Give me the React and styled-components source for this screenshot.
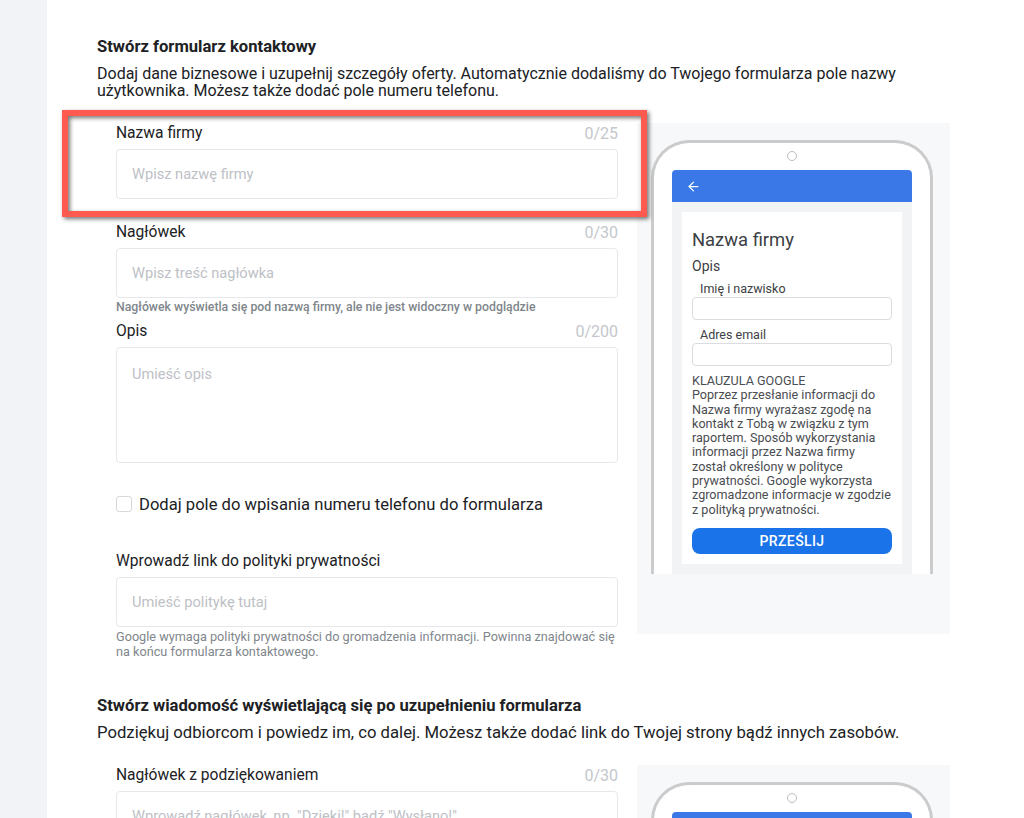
import React from 'react'
import styled, { createGlobalStyle } from 'styled-components'
import { ArrowLeft } from 'lucide-react'

const GlobalStyle = createGlobalStyle`
  * { box-sizing: border-box; }
  body {
    margin: 0;
    font-family: Roboto, "Noto Sans", "Liberation Sans", sans-serif;
    color: #202124;
    background: #fff;
  }
`

function Phone({ children }) {
    return (
        <PhoneFrame>
            <Camera />
            <Screen>
                <ScreenBar>
                    <ArrowLeft size={15} strokeWidth={2} color="#fff" />
                </ScreenBar>
                <ScreenBody>
                    <Card>{children}</Card>
                </ScreenBody>
            </Screen>
        </PhoneFrame>
    )
}

function App() {
    return (
        <Page>
            <GlobalStyle />
            <Sidebar />
            <Main>
                <Section>
                    <Title>Stwórz formularz kontaktowy</Title>
                    <Lead $size={16}>
                        Dodaj dane biznesowe i uzupełnij szczegóły oferty. Automatycznie dodaliśmy do Twojego formularza pole nazwy użytkownika. Możesz także dodać pole numeru telefonu.
                    </Lead>
                    <Row>
                        <FormCol>
                            <Field $gap={23}>
                                <Highlight />
                                <LabelRow>
                                    <Label>Nazwa firmy</Label>
                                    <Counter>0/25</Counter>
                                </LabelRow>
                                <Input placeholder="Wpisz nazwę firmy" />
                            </Field>
                            <Field $gap={6}>
                                <LabelRow>
                                    <Label>Nagłówek</Label>
                                    <Counter>0/30</Counter>
                                </LabelRow>
                                <Input placeholder="Wpisz treść nagłówka" />
                                <Helper $strong>Nagłówek wyświetla się pod nazwą firmy, ale nie jest widoczny w podglądzie</Helper>
                            </Field>
                            <Field $gap={31}>
                                <LabelRow>
                                    <Label>Opis</Label>
                                    <Counter>0/200</Counter>
                                </LabelRow>
                                <TextArea placeholder="Umieść opis" />
                            </Field>
                            <CheckRow>
                                <CheckBox type="checkbox" />
                                Dodaj pole do wpisania numeru telefonu do formularza
                            </CheckRow>
                            <Field $gap={0}>
                                <LabelRow>
                                    <Label>Wprowadź link do polityki prywatności</Label>
                                </LabelRow>
                                <Input placeholder="Umieść politykę tutaj" />
                                <Helper>
                                    Google wymaga polityki prywatności do gromadzenia informacji. Powinna znajdować się na końcu formularza kontaktowego.
                                </Helper>
                            </Field>
                        </FormCol>
                        <Preview>
                            <Phone>
                                <CardTitle>Nazwa firmy</CardTitle>
                                <CardDesc>Opis</CardDesc>
                                <MiniLabel>Imię i nazwisko</MiniLabel>
                                <MiniInput />
                                <MiniLabel>Adres email</MiniLabel>
                                <MiniInput />
                                <Clause>
                                    KLAUZULA GOOGLE<br />
                                    Poprzez przesłanie informacji do<br />
                                    Nazwa firmy wyrażasz zgodę na<br />
                                    kontakt z Tobą w związku z tym<br />
                                    raportem. Sposób wykorzystania<br />
                                    informacji przez Nazwa firmy<br />
                                    został określony w polityce<br />
                                    prywatności. Google wykorzysta<br />
                                    zgromadzone informacje w zgodzie<br />
                                    z polityką prywatności.
                                </Clause>
                                <SubmitButton>PRZEŚLIJ</SubmitButton>
                            </Phone>
                        </Preview>
                    </Row>
                </Section>

                <Section>
                    <Title>Stwórz wiadomość wyświetlającą się po uzupełnieniu formularza</Title>
                    <Lead $size={16.7}>
                        Podziękuj odbiorcom i powiedz im, co dalej. Możesz także dodać link do Twojej strony bądź innych zasobów.
                    </Lead>
                    <Row>
                        <FormCol>
                            <Field $gap={23}>
                                <LabelRow>
                                    <Label>Nagłówek z podziękowaniem</Label>
                                    <Counter>0/30</Counter>
                                </LabelRow>
                                <Input placeholder={'Wprowadź nagłówek, np. "Dzięki!" bądź "Wysłano!"'} />
                            </Field>
                            <Field $gap={0}>
                                <LabelRow>
                                    <Label>Opis</Label>
                                    <Counter>0/200</Counter>
                                </LabelRow>
                                <TextArea placeholder="Umieść opis" />
                            </Field>
                        </FormCol>
                        <Preview>
                            <Phone>
                                <CardTitle>Dzięki!</CardTitle>
                                <CardDesc>Opis</CardDesc>
                            </Phone>
                        </Preview>
                    </Row>
                </Section>
            </Main>
        </Page>
    )
}

export default App

const Page = styled.div`
    display: flex;
    min-height: 100vh;
`

const Sidebar = styled.aside`
    width: 47px;
    flex-shrink: 0;
    background: #f1f3f6;
`

const Main = styled.main`
    flex: 1;
    padding: 38px 0 40px 50px;
`

const Section = styled.section`
    margin-bottom: 38px;
`

const Title = styled.h2`
    margin: 0;
    font-size: 16.6px;
    line-height: 18px;
    font-weight: 700;
    color: #202124;
`

const Lead = styled.p`
    margin: 9px 0 0;
    max-width: 860px;
    font-size: ${p => p.$size}px;
    line-height: 17px;
    color: #202124;
`

const Row = styled.div`
    display: flex;
    align-items: flex-start;
    gap: 19px;
    margin-top: 24px;
    padding-left: 19px;
`

const FormCol = styled.div`
    width: 502px;
    display: flex;
    flex-direction: column;
`

const Field = styled.div`
    position: relative;
    margin-bottom: ${p => p.$gap}px;
`

const Highlight = styled.div`
    position: absolute;
    top: -13px;
    bottom: -18px;
    left: -54px;
    right: -29px;
    border: 6px solid #ff5a4f;
    filter: drop-shadow(2px 2px 2px rgba(0, 0, 0, 0.55));
    pointer-events: none;
`

const LabelRow = styled.div`
    display: flex;
    justify-content: space-between;
    align-items: center;
    height: 20px;
    margin-bottom: 6px;
`

const Label = styled.label`
    font-size: 15.6px;
    line-height: 20px;
    color: #202124;
`

const Counter = styled.span`
    font-size: 16px;
    color: #c4c7cc;
`

const Input = styled.input`
    display: block;
    width: 100%;
    height: 50px;
    padding: 0 15px;
    border: 1px solid #e6e8eb;
    border-radius: 4px;
    font-family: inherit;
    font-size: 14.6px;
    color: #202124;
    outline: none;

    &::placeholder {
        color: #bdc1c6;
    }
`

const TextArea = styled.textarea`
    display: block;
    width: 100%;
    height: 116px;
    padding: 16px 15px;
    border: 1px solid #e6e8eb;
    border-radius: 4px;
    font-family: inherit;
    font-size: 14.6px;
    line-height: 20px;
    resize: none;
    outline: none;

    &::placeholder {
        color: #bdc1c6;
    }
`

const Helper = styled.p`
    margin: 2px 0 0;
    font-size: ${p => (p.$strong ? 12.3 : 12.7)}px;
    line-height: 15px;
    font-weight: ${p => (p.$strong ? 500 : 400)};
    color: #80868b;
`

const CheckRow = styled.label`
    display: flex;
    align-items: center;
    gap: 7px;
    height: 20px;
    margin-bottom: 37px;
    font-size: 16.6px;
    color: #202124;
`

const CheckBox = styled.input`
    appearance: none;
    margin: 0;
    width: 16px;
    height: 16px;
    border: 1px solid #d5d8dc;
    border-radius: 3px;
    background: #fff;
`

const Preview = styled.div`
    width: 313px;
    height: 511px;
    flex-shrink: 0;
    padding: 17px 0 0 14px;
    background: #f6f8fa;
`

const PhoneFrame = styled.div`
    width: 282px;
    height: 434px;
    display: flex;
    flex-direction: column;
    align-items: center;
    padding: 8px 18px 0;
    border: 3px solid #cbcbcb;
    border-bottom: none;
    border-radius: 38px 38px 0 0;
    background: #fff;
    overflow: hidden;
`

const Camera = styled.div`
    width: 10px;
    height: 10px;
    margin-bottom: 9px;
    border: 1px solid #bdbdbd;
    border-radius: 50%;
`

const Screen = styled.div`
    align-self: stretch;
    flex: 1;
    display: flex;
    flex-direction: column;
`

const ScreenBar = styled.div`
    height: 32px;
    display: flex;
    align-items: center;
    padding-left: 14px;
    background: #3a78e7;
    border-radius: 4px 4px 0 0;
`

const ScreenBody = styled.div`
    flex: 1;
    padding: 10px 10px 9px;
    background: #f1f3f5;
`

const Card = styled.div`
    background: #fff;
    padding: 17px 10px 10px;
    color: #3c4043;
`

const CardTitle = styled.div`
    font-size: 18.4px;
    line-height: 22px;
`

const CardDesc = styled.div`
    margin-top: 7px;
    font-size: 14px;
    line-height: 16px;
`

const MiniLabel = styled.div`
    margin-top: 8px;
    padding-left: 8px;
    font-size: 12.5px;
    line-height: 14px;
`

const MiniInput = styled.div`
    height: 23px;
    margin-top: 1px;
    border: 1px solid #dadce0;
    border-radius: 4px;
`

const Clause = styled.p`
    margin: 8px 0 0;
    font-size: 12.6px;
    line-height: 14.3px;
    white-space: nowrap;
    color: #4a4d51;
`

const SubmitButton = styled.button`
    display: block;
    width: 100%;
    height: 26px;
    margin-top: 11px;
    border: none;
    border-radius: 8px;
    background: #1a73e8;
    color: #fff;
    font-family: inherit;
    font-size: 14px;
    font-weight: 500;
    letter-spacing: 0.4px;
`
